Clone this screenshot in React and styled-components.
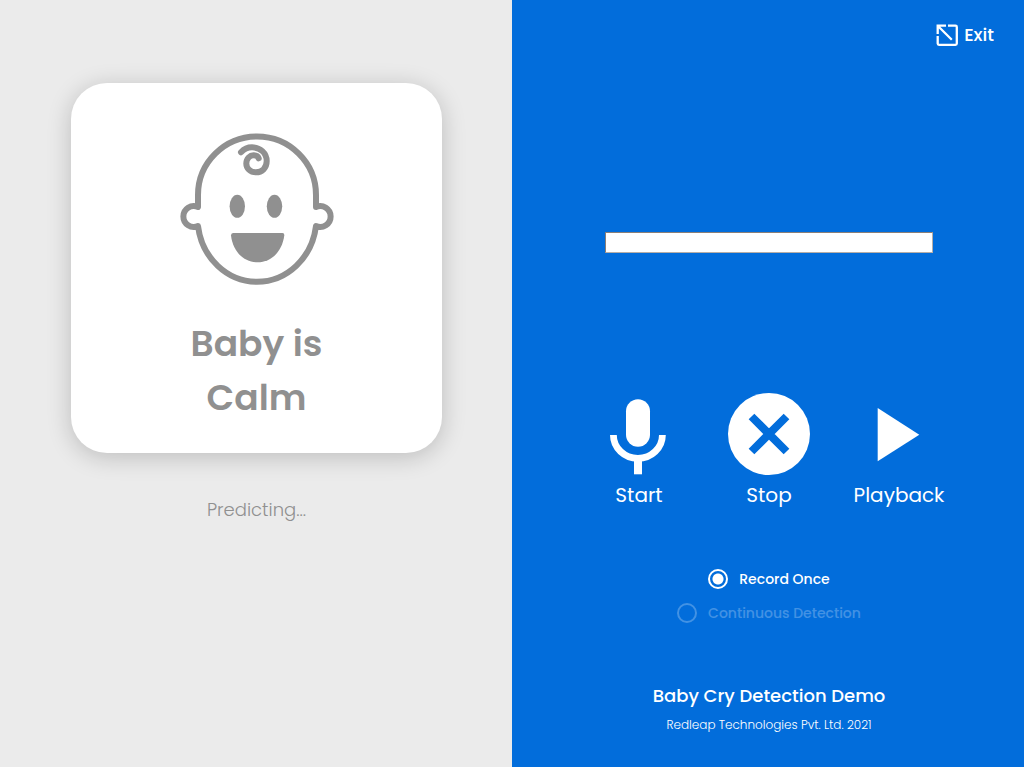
import React, { useState } from "react";
import styled, { createGlobalStyle } from "styled-components";

const GlobalStyle = createGlobalStyle`
  *, *::before, *::after { box-sizing: border-box; }
  body { margin: 0; background: #ebebeb; font-family: Poppins, Inter, "Liberation Sans", sans-serif; }
  button, input { font: inherit; color: inherit; }
`;

const Page = styled.main`
  display: grid;
  grid-template-columns: 1fr 1fr;
  min-height: 100vh;
`;

const StatusPanel = styled.section`
  display: flex;
  flex-direction: column;
  align-items: center;
  padding: 83px 70px 40px 71px;
  background: #ebebeb;
  color: #909090;
`;

const Card = styled.div`
  display: flex;
  flex-direction: column;
  align-items: center;
  width: 100%;
  max-width: 420px;
  padding: 50px 24px 28px;
  border-radius: 36px;
  background: #fff;
  box-shadow: 0 4px 24px rgba(0, 0, 0, 0.2);
`;

const Verdict = styled.h1`
  max-width: 180px;
  margin: 31px 0 0;
  font-size: 36px;
  font-weight: 600;
  line-height: 54px;
  text-align: center;
`;

const Progress = styled.p`
  margin: 43px 0 0;
  font-size: 18px;
  font-weight: 300;
  line-height: 28px;
`;

const ControlPanel = styled.section`
  display: flex;
  flex-direction: column;
  align-items: center;
  padding: 20px 30px 32px 32px;
  background: #026ddb;
  color: #fff;
`;

const ExitButton = styled.button`
  display: flex;
  align-items: center;
  align-self: flex-end;
  gap: 6px;
  padding: 0;
  border: 0;
  background: none;
  font-size: 18px;
  font-weight: 500;
  line-height: 30px;
  cursor: pointer;
`;

const Field = styled.input`
  width: 328px;
  max-width: 100%;
  height: 21px;
  margin-top: 182px;
  padding: 0 4px;
  border: 1px solid;
  border-color: #8a7f78 #b5aea8 #b5aea8 #8a7f78;
  border-radius: 0;
  background: #fff;
  color: #333;
`;

const Actions = styled.div`
  display: grid;
  grid-template-columns: repeat(3, 130px);
  margin-top: 140px;
`;

const Action = styled.button`
  display: flex;
  flex-direction: column;
  align-items: center;
  gap: 4px;
  padding: 0;
  border: 0;
  background: none;
  font-size: 20px;
  font-weight: 400;
  line-height: 32px;
  cursor: pointer;
`;

const Modes = styled.div`
  display: flex;
  flex-direction: column;
  align-items: center;
  gap: 10px;
  margin-top: 56px;
`;

const Mode = styled.label`
  display: flex;
  align-items: center;
  gap: 11px;
  font-size: 14px;
  font-weight: 500;
  line-height: 24px;
  opacity: ${(p) => (p.$dimmed ? 0.25 : 1)};
  cursor: pointer;
`;

const Radio = styled.input`
  appearance: none;
  width: 20px;
  height: 20px;
  margin: 0;
  border: 2px solid #fff;
  border-radius: 50%;

  &:checked {
    background: radial-gradient(circle, #fff 5px, transparent 6px);
  }
`;

const Footer = styled.footer`
  display: flex;
  flex-direction: column;
  align-items: center;
  margin-top: 57px;
`;

const Title = styled.h2`
  margin: 0;
  font-size: 18px;
  font-weight: 500;
  line-height: 28px;
`;

const Company = styled.p`
  margin: 3px 0 0;
  font-size: 12px;
  font-weight: 300;
  line-height: 24px;
`;

const BabyIcon = () => (
  <svg width="154" height="153" viewBox="0 0 154 153" overflow="visible" fill="none" stroke="#909090" strokeWidth="6" strokeLinecap="round" strokeLinejoin="round" aria-hidden="true">
    <path d="M18 74V62A59 58.5 0 0 1 136 62V74A10.4 10.4 0 1 1 136 93A59.5 64 0 0 1 18 93A10.4 10.4 0 1 1 18 74Z" />
    <path d="M61 19.3C64 16 68 14.3 72 14.3C80 14.3 86.7 20 86.7 28C86.7 35 82 39.3 76 39.3C70 39.3 66.3 35 66.3 30.5C66.3 25.5 70 22.3 73.5 22.3C76 22.3 78 23.5 78.7 25.3" />
    <g fill="#909090" stroke="none">
      <ellipse cx="57.3" cy="73.3" rx="7.7" ry="11.5" />
      <ellipse cx="94.5" cy="73.3" rx="7.7" ry="11.5" />
      <path d="M53 100H102.5Q104.6 100 104.3 102.5C102 119 91 129.3 77.5 129.3C64 129.3 53 119 51 102.5Q51 100 53 100Z" />
    </g>
  </svg>
);

const ExitIcon = () => (
  <svg width="22" height="22" viewBox="0 0 22 22" fill="none" stroke="#fff" strokeWidth="2.3" aria-hidden="true">
    <path d="M12 1.7H19.5Q20.8 1.7 20.8 3V19.5Q20.8 20.8 19.5 20.8H3Q1.7 20.8 1.7 19.5V12" />
    <path d="M1.7 10V1.7H10M1.7 1.7L15.8 15.8" />
  </svg>
);

const MicIcon = () => (
  <svg width="82" height="82" viewBox="0 0 82 82" fill="#fff" aria-hidden="true">
    <rect x="28" y="6.3" width="24" height="47.5" rx="12" />
    <path d="M15.4 42A24.5 23.3 0 0 0 64.4 42" fill="none" stroke="#fff" strokeWidth="6.8" />
    <rect x="36" y="66" width="8" height="15.3" />
  </svg>
);

const StopIcon = () => (
  <svg width="82" height="82" viewBox="0 0 82 82" aria-hidden="true">
    <circle cx="41" cy="41" r="41" fill="#fff" />
    <path d="M23.5 23.5L58.5 58.5M58.5 23.5L23.5 58.5" stroke="#026ddb" strokeWidth="8" />
  </svg>
);

const PlayIcon = () => (
  <svg width="82" height="82" viewBox="0 0 82 82" fill="#fff" aria-hidden="true">
    <path d="M19.7 15L61.3 41.7L19.7 68.3Z" />
  </svg>
);

const actions = [
  { label: "Start", Icon: MicIcon },
  { label: "Stop", Icon: StopIcon },
  { label: "Playback", Icon: PlayIcon },
];

const modes = ["Record Once", "Continuous Detection"];

export default function App() {
  const [mode, setMode] = useState(modes[0]);

  return (
    <>
      <GlobalStyle />
      <Page>
        <StatusPanel>
          <Card>
            <BabyIcon />
            <Verdict>Baby is Calm</Verdict>
          </Card>
          <Progress>Predicting...</Progress>
        </StatusPanel>
        <ControlPanel>
          <ExitButton type="button">
            <ExitIcon />
            Exit
          </ExitButton>
          <Field type="text" aria-label="Recording" />
          <Actions>
            {actions.map(({ label, Icon }) => (
              <Action key={label} type="button">
                <Icon />
                {label}
              </Action>
            ))}
          </Actions>
          <Modes role="radiogroup">
            {modes.map((name) => (
              <Mode key={name} $dimmed={mode !== name}>
                <Radio type="radio" name="mode" checked={mode === name} onChange={() => setMode(name)} />
                {name}
              </Mode>
            ))}
          </Modes>
          <Footer>
            <Title>Baby Cry Detection Demo</Title>
            <Company>Redleap Technologies Pvt. Ltd. 2021</Company>
          </Footer>
        </ControlPanel>
      </Page>
    </>
  );
}
